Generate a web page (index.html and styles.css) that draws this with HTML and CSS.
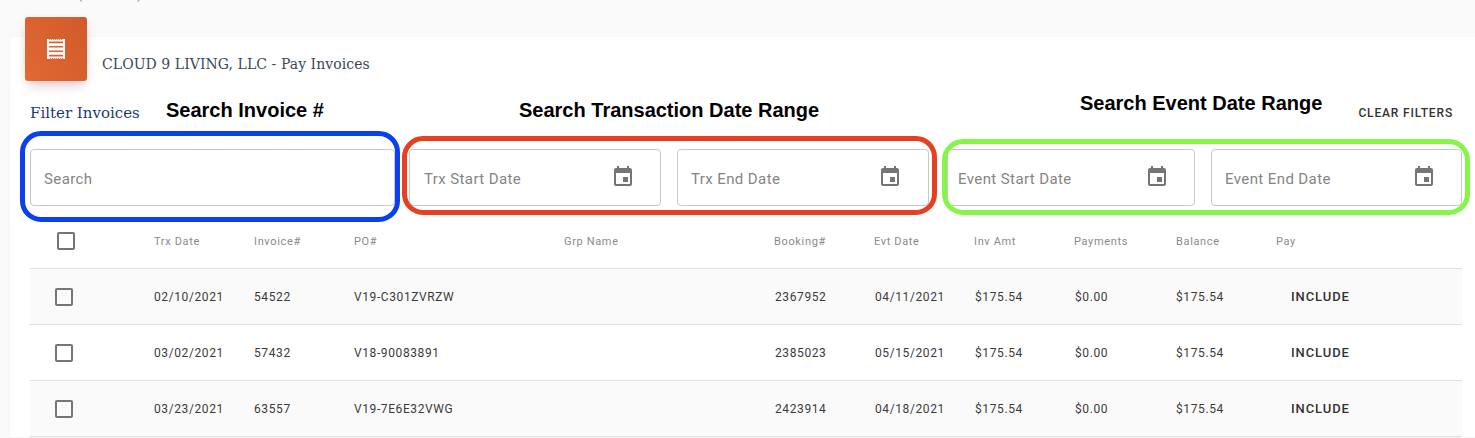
FILE: index.html
```html
<!DOCTYPE html>
<html lang="en">
<head>
  <meta charset="UTF-8">
  <title>Pay Invoices</title>
  <link rel="stylesheet" href="styles.css">
</head>
<body>
  <!-- Crumb cut off by the top of the page -->
  <div class="top-strip"><span class="crumb">(Past Due)</span></div>

  <div class="card">
    <div class="card-badge">
      <svg width="24" height="24" viewBox="0 0 24 24"><path fill="#fff" fill-rule="evenodd" d="M3 2h1.500l1 1 1-1 1 1 1-1 1 1 1-1 1 1 1-1 1 1 1-1 1 1 1-1 1 1 1-1H21v20h-1.500l-1-1-1 1-1-1-1 1-1-1-1 1-1-1-1 1-1-1-1 1-1-1-1 1-1-1-1 1H3zM5 4.600h14v1.600H5zM5 8.900h14v1.600H5zM5 13.500h14v1.600H5zM5 17.800h14v1.600H5z"/></svg>
    </div>
    <div class="card-title">CLOUD 9 LIVING, LLC - Pay Invoices</div>

    <div class="filter-head">
      <span class="filter-title">Filter Invoices</span>
      <button class="clear-btn">Clear Filters</button>
    </div>

    <div class="filter-row">
      <div class="field field-search"><span>Search</span></div>
      <div class="field field-trx1"><span>Trx Start Date</span>
        <svg class="cal" width="24" height="24" viewBox="0 0 24 24"><path d="M17 12h-5v5h5v-5zM16 1v2H8V1H6v2H5c-1.110 0-1.990.9-1.990 2L3 19c0 1.100.89 2 2 2h14c1.100 0 2-.9 2-2V5c0-1.100-.9-2-2-2h-1V1h-2zm3 18H5V8h14v11z"/></svg>
      </div>
      <div class="field field-trx2"><span>Trx End Date</span>
        <svg class="cal" width="24" height="24" viewBox="0 0 24 24"><path d="M17 12h-5v5h5v-5zM16 1v2H8V1H6v2H5c-1.110 0-1.990.9-1.990 2L3 19c0 1.100.89 2 2 2h14c1.100 0 2-.9 2-2V5c0-1.100-.9-2-2-2h-1V1h-2zm3 18H5V8h14v11z"/></svg>
      </div>
      <div class="field field-evt1"><span>Event Start Date</span>
        <svg class="cal" width="24" height="24" viewBox="0 0 24 24"><path d="M17 12h-5v5h5v-5zM16 1v2H8V1H6v2H5c-1.110 0-1.990.9-1.990 2L3 19c0 1.100.89 2 2 2h14c1.100 0 2-.9 2-2V5c0-1.100-.9-2-2-2h-1V1h-2zm3 18H5V8h14v11z"/></svg>
      </div>
      <div class="field field-evt2"><span>Event End Date</span>
        <svg class="cal" width="24" height="24" viewBox="0 0 24 24"><path d="M17 12h-5v5h5v-5zM16 1v2H8V1H6v2H5c-1.110 0-1.990.9-1.990 2L3 19c0 1.100.89 2 2 2h14c1.100 0 2-.9 2-2V5c0-1.100-.9-2-2-2h-1V1h-2zm3 18H5V8h14v11z"/></svg>
      </div>
    </div>

    <div class="table">
      <div class="row row-head">
        <div class="check"><svg width="24" height="24" viewBox="0 0 24 24"><path d="M19 5v14H5V5h14m0-2H5c-1.100 0-2 .9-2 2v14c0 1.100.9 2 2 2h14c1.100 0 2-.9 2-2V5c0-1.100-.9-2-2-2z"/></svg></div>
        <div>Trx Date</div><div>Invoice#</div><div>PO#</div><div>Grp Name</div><div>Booking#</div><div>Evt Date</div><div>Inv Amt</div><div>Payments</div><div>Balance</div><div>Pay</div>
      </div>
      <div class="row">
        <div class="check"><svg width="24" height="24" viewBox="0 0 24 24"><path d="M19 5v14H5V5h14m0-2H5c-1.100 0-2 .9-2 2v14c0 1.100.9 2 2 2h14c1.100 0 2-.9 2-2V5c0-1.100-.9-2-2-2z"/></svg></div>
        <div>02/10/2021</div><div>54522</div><div>V19-C301ZVRZW</div><div></div><div>2367952</div><div>04/11/2021</div><div>$175.54</div><div>$0.00</div><div>$175.54</div><div class="include">Include</div>
      </div>
      <div class="row">
        <div class="check"><svg width="24" height="24" viewBox="0 0 24 24"><path d="M19 5v14H5V5h14m0-2H5c-1.100 0-2 .9-2 2v14c0 1.100.9 2 2 2h14c1.100 0 2-.9 2-2V5c0-1.100-.9-2-2-2z"/></svg></div>
        <div>03/02/2021</div><div>57432</div><div>V18-90083891</div><div></div><div>2385023</div><div>05/15/2021</div><div>$175.54</div><div>$0.00</div><div>$175.54</div><div class="include">Include</div>
      </div>
      <div class="row">
        <div class="check"><svg width="24" height="24" viewBox="0 0 24 24"><path d="M19 5v14H5V5h14m0-2H5c-1.100 0-2 .9-2 2v14c0 1.100.9 2 2 2h14c1.100 0 2-.9 2-2V5c0-1.100-.9-2-2-2z"/></svg></div>
        <div>03/23/2021</div><div>63557</div><div>V19-7E6E32VWG</div><div></div><div>2423914</div><div>04/18/2021</div><div>$175.54</div><div>$0.00</div><div>$175.54</div><div class="include">Include</div>
      </div>
    </div>
  </div>

  <!-- Annotations drawn over the screenshot -->
  <div class="note note-invoice">Search Invoice #</div>
  <div class="note note-trx">Search Transaction Date Range</div>
  <div class="note note-event">Search Event Date Range</div>
  <div class="ring ring-blue"></div>
  <div class="ring ring-red"></div>
  <div class="ring ring-green"></div>
</body>
</html>
```

FILE: styles.css
```css
html, body {
  height: 438px;
  overflow: hidden;
}

body {
  position: relative;
  margin: 0;
  background-color: #fafafa;
  font-family: Roboto, sans-serif;
}

.top-strip {
  height: 37px;
  overflow: hidden;
}

.crumb {
  display: block;
  margin: -12px 0 0 78px;
  font-family: "DejaVu Serif", serif;
  font-size: 12px;
  line-height: 16px;
  color: #6b7280;
}

.card {
  position: relative;
  margin-left: 10px;
  padding: 0 13px 0 20px;
  background-color: white;
  border-radius: 6px 0 0 0;
  box-shadow: 0 1px 3px rgba(0,0,0,0.04);
}

.card-badge {
  position: absolute;
  left: 15px;
  top: -20px;
  width: 62px;
  height: 64px;
  display: flex;
  justify-content: center;
  align-items: center;
  background: linear-gradient(60deg, #e16933, #d15a2b);
  border-radius: 3px;
  box-shadow: 0 6px 12px -4px rgba(160,60,60,0.4);
}

.card-title {
  padding: 17px 0 0 72px;
  height: 20px;
  font-family: "DejaVu Serif", serif;
  font-size: 14px;
  line-height: 20px;
  letter-spacing: 0.06px;
  color: #3c4858;
}

.filter-head {
  display: flex;
  justify-content: space-between;
  align-items: center;
  margin-top: 29px;
  height: 20px;
}

.filter-title {
  font-family: "DejaVu Serif", serif;
  font-size: 15px;
  color: #1c3a6e;
}

.clear-btn {
  margin-right: 9px;
  padding: 0;
  border: none;
  background: none;
  font-family: Roboto, sans-serif;
  font-size: 12px;
  font-weight: 500;
  letter-spacing: 0.85px;
  text-transform: uppercase;
  color: #333;
}

.filter-row {
  display: flex;
  margin-top: 26px;
}

.field {
  box-sizing: border-box;
  height: 57px;
  display: flex;
  justify-content: space-between;
  align-items: center;
  padding: 0 25px 0 13px;
  background-color: white;
  border: 1px solid #c8c8c8;
  border-radius: 4px;
  font-size: 15px;
  letter-spacing: 0.4px;
  color: #858585;
}

.field span {
  padding-top: 2px;
}

.cal {
  margin-bottom: 2px;
  fill: #757575;
}

.field-search { width: 365px; margin-right: 14px; }
.field-trx1 { width: 252px; margin-right: 16px; padding-left: 14px; }
.field-trx2 { width: 252px; margin-right: 18px; padding-right: 26px; }
.field-evt1 { width: 248px; margin-right: 16px; padding-left: 10px; }
.field-evt2 { width: 251px; }

.table {
  margin-top: 6px;
}

.row {
  display: grid;
  grid-template-columns: 124px 100px 100px 210px 210px 100px 100px 100px 101px 100px 1fr;
  align-items: center;
  height: 55px;
  border-bottom: 1px solid #e0e0e0;
  font-size: 12px;
  letter-spacing: 0.6px;
  color: #3a3a3a;
}

.row:nth-child(even) {
  background-color: #fafafa;
}

.row > div:nth-child(n+6) {
  padding-left: 1px;
}

.row-head {
  box-sizing: border-box;
  height: 57px;
  padding-top: 2px;
  font-size: 11px;
  letter-spacing: 0.65px;
  color: #8a8a8a;
}

.row-head > div:nth-child(-n+9) {
  padding-left: 0;
}

.check {
  padding-left: 22px;
  height: 24px;
}

.check svg {
  display: block;
  fill: #757575;
}

.row-head > .check:first-child {
  padding-left: 24px;
}

.row > div.include {
  padding-left: 16px;
  font-size: 13px;
  font-weight: 500;
  letter-spacing: 0.9px;
  text-transform: uppercase;
  color: #333;
}

.note {
  position: absolute;
  font-family: "Liberation Sans", Arial, sans-serif;
  font-size: 20px;
  font-weight: bold;
  line-height: 24px;
  color: #000;
}

.note-invoice { left: 166px; top: 98px; }
.note-trx { left: 519px; top: 98px; }
.note-event { left: 1080px; top: 91px; }

.ring {
  position: absolute;
  box-sizing: border-box;
  border-style: solid;
  border-width: 5px;
  border-radius: 21px;
}

.ring-blue { left: 20px; top: 131px; width: 380px; height: 91px; border-color: #0b40f0; }
.ring-red { left: 402px; top: 136px; width: 535px; height: 79px; border-color: #e63f22; }
.ring-green { left: 942px; top: 139px; width: 528px; height: 76px; border-color: #86f54a; }
```
